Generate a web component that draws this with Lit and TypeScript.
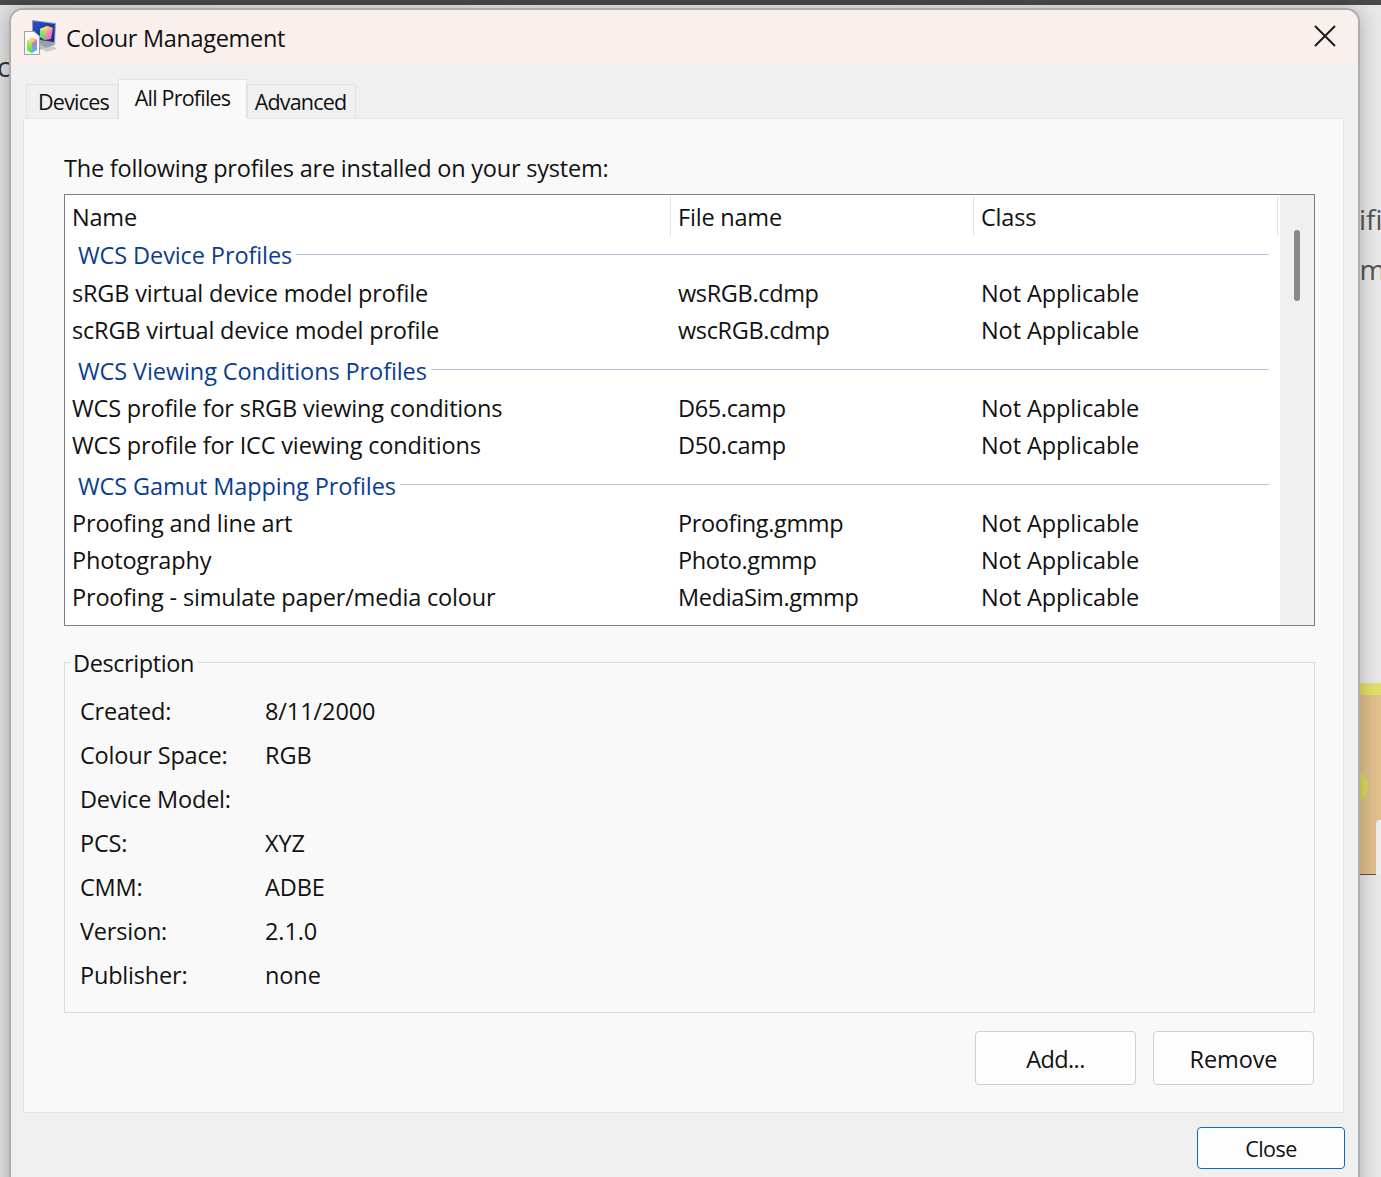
import { LitElement, html, css, svg } from "lit";
import { customElement } from "lit/decorators.js";

type Row = [string, string];
const groups: { title: string; rows: Row[] }[] = [
  { title: "WCS Device Profiles", rows: [["sRGB virtual device model profile", "wsRGB.cdmp"], ["scRGB virtual device model profile", "wscRGB.cdmp"]] },
  { title: "WCS Viewing Conditions Profiles", rows: [["WCS profile for sRGB viewing conditions", "D65.camp"], ["WCS profile for ICC viewing conditions", "D50.camp"]] },
  { title: "WCS Gamut Mapping Profiles", rows: [["Proofing and line art", "Proofing.gmmp"], ["Photography", "Photo.gmmp"], ["Proofing - simulate paper/media colour", "MediaSim.gmmp"]] },
];
const details: Row[] = [
  ["Created:", "8/11/2000"], ["Colour Space:", "RGB"], ["Device Model:", ""], ["PCS:", "XYZ"],
  ["CMM:", "ADBE"], ["Version:", "2.1.0"], ["Publisher:", "none"],
];

const icon = svg`<svg class="icon" width="34" height="36" viewBox="0 0 34 36">
  <defs>
    <linearGradient id="sc" x1="0" y1="0" x2="1" y2="1"><stop offset="0" stop-color="#2a52cc"/><stop offset="1" stop-color="#0d2a90"/></linearGradient>
    <linearGradient id="a" x1="0" y1="0" x2="1" y2="1"><stop offset="0" stop-color="#f7d0e8"/><stop offset="1" stop-color="#ef4fa8"/></linearGradient>
    <linearGradient id="b" x1="0" y1="0" x2="1" y2="0"><stop offset="0" stop-color="#f5f07a"/><stop offset="1" stop-color="#f8a868"/></linearGradient>
    <linearGradient id="c" x1="0" y1="0" x2="0" y2="1"><stop offset="0" stop-color="#c4ea50"/><stop offset="1" stop-color="#3fd85e"/></linearGradient>
    <linearGradient id="d" x1="0" y1="0" x2="0" y2="1"><stop offset="0" stop-color="#f060c0"/><stop offset="1" stop-color="#38c8ee"/></linearGradient>
  </defs>
  <path d="M12 15 L31 9 L31 26 L16 31 Z" fill="#b9bdc4"/>
  <path d="M8 1 L32 4 L31 25 L23 29 L8 21 Z" fill="#9aa0a8"/>
  <path d="M9 2 L31 5 L30 23 L9 20 Z" fill="url(#sc)"/>
  <path d="M16 10 L23 7 L29 9 L27 20 L21 21 L16 18 Z" fill="url(#a)"/>
  <path d="M16 10 L23 7 L29 9 L22 12 Z" fill="url(#b)"/>
  <path d="M16 10 L22 12 L21 21 L16 18 Z" fill="url(#c)"/>
  <path d="M18 30 L29 27 L33 30 L22 33 Z" fill="#c9ccd1"/>
  <path d="M0.5 12.5 H10 L15.5 17 V35.5 H0.5 Z" fill="#fafafa" stroke="#a0a0a0" stroke-width="1"/>
  <path d="M3 22 L8 19 L13 21 L13 31 L8 34 L3 31 Z" fill="url(#d)"/>
  <path d="M3 22 L8 19 L13 21 L8 24 Z" fill="url(#b)"/>
  <path d="M3 22 L8 24 L8 34 L3 31 Z" fill="url(#c)"/>
</svg>`;

@customElement("app-root")
export class AppRoot extends LitElement {
  static styles = css`
    :host { display: block; width: 1381px; height: 1177px; overflow: hidden; position: relative;
      background: linear-gradient(90deg, #e4e4e4, #f2f2f2 50%, #e9e9e9); color: #111;
      font-family: "Open Sans", "Noto Sans", sans-serif; font-size: 23.5px; letter-spacing: -0.1px; }
    .topbar { height: 5px; background: #4a4a4a; }
    .peek { position: absolute; color: #555; font-size: 28px; line-height: 32px; }
    .peek-c { left: -3px; top: 50px; color: #333; }
    .peek-ifi { left: 1359px; top: 203px; letter-spacing: 0; }
    .peek-em { left: 1344px; top: 253px; }
    .art { position: absolute; left: 1359px; top: 683px; width: 22px; height: 192px; overflow: hidden; background: #e2c28e; }
    .art-band { height: 12px; background: #e2e26a; }
    .art-dot { position: absolute; left: -25px; top: 87px; width: 34px; height: 34px; border-radius: 50%; background: #dcdc5c; }
    .art-card { position: absolute; left: 17px; top: 137px; width: 20px; height: 60px; border-radius: 4px 0 0 0; background: #eee; }
    .art-line { position: absolute; left: 0; bottom: 0; width: 17px; height: 1px; background: #6b5040; }

    .window { position: relative; box-sizing: border-box; width: 1351px; height: 1200px; margin: 3px 0 0 9px;
      border: 2px solid #adadad; border-radius: 14px; background: #f0f0f0; overflow: hidden;
      box-shadow: 0 0 22px rgba(0,0,0,.28); }
    .title { height: 56px; box-sizing: border-box; background: #f9f0ed; display: flex; align-items: center;
      padding: 0 0 0 13px; font-size: 23.5px; }
    .title .icon { flex: none; margin: -2px 8px 0 0; }
    .title .name { flex: 1; letter-spacing: -0.32px; }
    .x { width: 22px; height: 22px; margin: -4px 22px 0 0; }
    .tabs { display: flex; align-items: flex-end; height: 52px; padding-left: 15px; font-size: 21.5px; letter-spacing: -0.8px; }
    .tab { height: 34px; box-sizing: border-box; border: 1px solid #e3e3e3; border-bottom: none; display: flex;
      justify-content: center; align-items: center; }
    .tab-devices { width: 92px; padding-left: 3px; }
    .tab-all { width: 129px; }
    .tab-advanced { width: 109px; padding-right: 2px; }
    .tab.active { background: #f9f9f9; border-color: #e3e3e3; margin-bottom: -1px; height: 40px; padding: 0 0 4px; position: relative; z-index: 1; }
    .panel { margin-left: 12px; width: 1321px; height: 995px; box-sizing: border-box; background: #f9f9f9; border: 1px solid #e5e5e5;
      padding: 28px 28px 0 40px; }
    .lead { height: 47px; line-height: 42px; letter-spacing: -0.21px; }
    .list { width: 1251px; height: 432px; box-sizing: border-box; border: 1px solid #7f7f7f; background: #fff; display: flex; overflow: hidden; }
    .list-main { flex: 1; min-width: 0; }
    .sb { width: 34px; background: #f0f0f0; display: flex; justify-content: center; padding-top: 35px; box-sizing: border-box; }
    .thumb { width: 6px; height: 71px; border-radius: 3px; background: #8a8a8a; margin-right: 1px; }
    .cols { display: grid; grid-template-columns: 606px 303px 304px; }
    .cols > span { padding-left: 7px; white-space: nowrap; }
    .head { height: 41px; margin-top: 1px; align-items: start; letter-spacing: -0.2px; }
    .head > span { height: 40px; line-height: 43px; border-right: 1px solid #e5e5e5; box-sizing: border-box; }
    .row { height: 37px; line-height: 37px; }
    .row > span:first-child { letter-spacing: -0.17px; }
    .row > span:nth-child(2) { letter-spacing: -0.35px; }
    .group { display: flex; align-items: center; gap: 4px; height: 41px; margin-right: 2px; padding: 2px 9px 0 13px; color: #0a3d91; box-sizing: border-box; }
    .group.first { height: 38px; padding: 0 9px 3px 13px; }
    .group.first::after { margin-top: 0; }
    .group::after { content: ""; flex: 1; height: 1px; background: #b5c2d6; margin-top: -2px; }
    .desc { position: relative; box-sizing: border-box; width: 1251px; height: 351px; margin-top: 36px; border: 1px solid #dcdcdc;
      padding: 26px 15px 0 15px; }
    .legend { position: absolute; left: 5px; top: -16px; padding: 0 3px; line-height: 32px; background: #f9f9f9; letter-spacing: -0.4px; }
    .d { display: grid; grid-template-columns: 185px 1fr; height: 44px; line-height: 44px; }
    .d > span:first-child { letter-spacing: -0.2px; }
    .btns { display: flex; justify-content: flex-end; gap: 17px; width: 1250px; margin-top: 18px; }
    button { font: inherit; color: inherit; letter-spacing: inherit; background: #fdfdfd; border: 1px solid #d0d0d0; border-radius: 4px;
      padding: 0; box-sizing: border-box; }
    .btns button { width: 161px; height: 54px; padding-top: 2px; }
    .btns .add { letter-spacing: -0.6px; }
    .foot { display: flex; justify-content: flex-end; padding: 14px 13px 0 0; }
    .close { width: 148px; height: 42px; border-color: #0f6cbd; font-size: 21.5px; letter-spacing: -0.5px; }
  `;

  render() {
    return html`
      <div class="topbar"></div>
      <span class="peek peek-c">c</span>
      <span class="peek peek-ifi">ifi</span>
      <span class="peek peek-em">em</span>
      <div class="art"><div class="art-band"></div><div class="art-dot"></div><div class="art-card"></div><div class="art-line"></div></div>
      <div class="window">
        <div class="title">
          ${icon}
          <span class="name">Colour Management</span>
          <svg class="x" viewBox="0 0 22 22"><path d="M1 1 L21 21 M21 1 L1 21" stroke="#1a1a1a" stroke-width="2" fill="none"/></svg>
        </div>
        <div class="tabs">
          <div class="tab tab-devices">Devices</div>
          <div class="tab tab-all active">All Profiles</div>
          <div class="tab tab-advanced">Advanced</div>
        </div>
        <div class="panel">
          <div class="lead">The following profiles are installed on your system:</div>
          <div class="list">
            <div class="list-main">
              <div class="cols head"><span>Name</span><span>File name</span><span>Class</span></div>
              ${groups.map((g, i) => html`
                <div class="group ${i === 0 ? "first" : ""}"><span>${g.title}</span></div>
                ${g.rows.map((r) => html`<div class="cols row"><span>${r[0]}</span><span>${r[1]}</span><span>Not Applicable</span></div>`)}
              `)}
            </div>
            <div class="sb"><div class="thumb"></div></div>
          </div>
          <div class="desc">
            <span class="legend">Description</span>
            ${details.map((d) => html`<div class="d"><span>${d[0]}</span><span>${d[1]}</span></div>`)}
          </div>
          <div class="btns"><button class="add">Add...</button><button>Remove</button></div>
        </div>
        <div class="foot"><button class="close">Close</button></div>
      </div>
    `;
  }
}
